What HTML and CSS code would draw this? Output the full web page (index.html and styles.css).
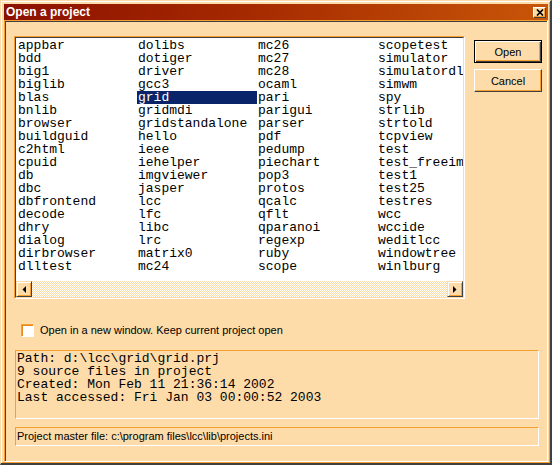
FILE: index.html
```html
<!DOCTYPE html>
<html>
<head>
<meta charset="utf-8">
<title>Open a project</title>
<link rel="stylesheet" href="styles.css">
</head>
<body>
<div class="window">
  <div class="titlebar">
    <span class="title">Open a project</span>
    <span class="close"><svg width="8" height="7" viewBox="0 0 8 7"><path d="M1 0.5L7 6.5M7 0.5L1 6.5" stroke="#000" stroke-width="1.7" fill="none"/></svg></span>
  </div>
  <div class="client">
    <div class="main">
      <div class="listbox">
        <div class="listbox-inner">
          <div class="items">
            <div class="item">appbar</div>
            <div class="item">bdd</div>
            <div class="item">big1</div>
            <div class="item">biglib</div>
            <div class="item">blas</div>
            <div class="item">bnlib</div>
            <div class="item">browser</div>
            <div class="item">buildguid</div>
            <div class="item">c2html</div>
            <div class="item">cpuid</div>
            <div class="item">db</div>
            <div class="item">dbc</div>
            <div class="item">dbfrontend</div>
            <div class="item">decode</div>
            <div class="item">dhry</div>
            <div class="item">dialog</div>
            <div class="item">dirbrowser</div>
            <div class="item">dlltest</div>
            <div class="item">dolibs</div>
            <div class="item">dotiger</div>
            <div class="item">driver</div>
            <div class="item">gcc3</div>
            <div class="item sel">grid</div>
            <div class="item">gridmdi</div>
            <div class="item">gridstandalone</div>
            <div class="item">hello</div>
            <div class="item">ieee</div>
            <div class="item">iehelper</div>
            <div class="item">imgviewer</div>
            <div class="item">jasper</div>
            <div class="item">lcc</div>
            <div class="item">lfc</div>
            <div class="item">libc</div>
            <div class="item">lrc</div>
            <div class="item">matrix0</div>
            <div class="item">mc24</div>
            <div class="item">mc26</div>
            <div class="item">mc27</div>
            <div class="item">mc28</div>
            <div class="item">ocaml</div>
            <div class="item">pari</div>
            <div class="item">parigui</div>
            <div class="item">parser</div>
            <div class="item">pdf</div>
            <div class="item">pedump</div>
            <div class="item">piechart</div>
            <div class="item">pop3</div>
            <div class="item">protos</div>
            <div class="item">qcalc</div>
            <div class="item">qflt</div>
            <div class="item">qparanoi</div>
            <div class="item">regexp</div>
            <div class="item">ruby</div>
            <div class="item">scope</div>
            <div class="item">scopetest</div>
            <div class="item">simulator</div>
            <div class="item">simulatordll</div>
            <div class="item">simwm</div>
            <div class="item">spy</div>
            <div class="item">strlib</div>
            <div class="item">strtold</div>
            <div class="item">tcpview</div>
            <div class="item">test</div>
            <div class="item">test_freeimage</div>
            <div class="item">test1</div>
            <div class="item">test25</div>
            <div class="item">testres</div>
            <div class="item">wcc</div>
            <div class="item">wccide</div>
            <div class="item">weditlcc</div>
            <div class="item">windowtree</div>
            <div class="item">winlburg</div>
          </div>
          <div class="hscroll">
            <div class="sbtn"><svg width="4" height="7" viewBox="0 0 4 7"><path d="M4 0V7L0.5 3.5Z" fill="#000"/></svg></div>
            <div class="track"></div>
            <div class="sbtn"><svg width="4" height="7" viewBox="0 0 4 7"><path d="M0 0V7L3.5 3.5Z" fill="#000"/></svg></div>
          </div>
        </div>
      </div>
      <div class="buttons">
        <div class="btn default">Open</div>
        <div class="btn">Cancel</div>
      </div>
    </div>
    <div class="check"><span class="box"></span><span class="label">Open in a new window. Keep current project open</span></div>
    <div class="info">Path: d:\lcc\grid\grid.prj<br>9 source files in project<br>Created: Mon Feb 11 21:36:14 2002<br>Last accessed: Fri Jan 03 00:00:52 2003</div>
    <div class="status">Project master file: c:\program files\lcc\lib\projects.ini</div>
  </div>
</div>
</body>
</html>
```
FILE: styles.css
```css
html, body {
  margin: 0;
  padding: 0;
  background: #fedcaa;
  font-family: "Liberation Sans", Arial, sans-serif;
  font-size: 11px;
  color: #000;
}
.window {
  width: 552px;
  height: 465px;
  box-sizing: border-box;
  border-style: solid;
  border-width: 1px 2px 2px 1px;
  border-color: #fedcaa #404040 #404040 #fedcaa;
  box-shadow: inset 1px 1px #fff, inset -1px -1px #f5a030;
  padding: 3px 2px 1px 3px;
  background: #fedcaa;
  display: flex;
  flex-direction: column;
}
.titlebar {
  height: 16px;
  flex: none;
  display: flex;
  align-items: center;
  justify-content: space-between;
  padding: 0 2px 0 2px;
  background: linear-gradient(to right, #8c1000 0%, #a52a00 45%, #c85608 100%);
}
.title {
  color: #fff;
  font-weight: bold;
  font-size: 12px;
  line-height: 16px;
}
.close {
  width: 13px;
  height: 11px;
  box-sizing: border-box;
  background: #fedcaa;
  border-style: solid;
  border-width: 1px;
  border-color: #fff #404040 #404040 #fff;
  box-shadow: inset -1px -1px #f5a030;
  display: flex;
  align-items: center;
  justify-content: center;
}
.close svg { display: block; }
.client {
  flex: 1;
  border-style: solid;
  border-width: 1px;
  border-color: #f5a030 #fff #fff #f5a030;
  box-shadow: inset 1px 1px #404040;
  padding: 1px 0 0 1px;
  display: flex;
  flex-direction: column;
}
.main {
  display: flex;
  margin: 14px 0 0 8px;
}
.listbox {
  width: 451px;
  height: 263px;
  box-sizing: border-box;
  border-style: solid;
  border-width: 1px;
  border-color: #f5a030 #fff #fff #f5a030;
}
.listbox-inner {
  height: 100%;
  box-sizing: border-box;
  border-style: solid;
  border-width: 1px;
  border-color: #404040 #fedcaa #fedcaa #404040;
  background: #fff;
  display: flex;
  flex-direction: column;
}
.items {
  flex: 1;
  overflow: hidden;
  padding: 1px 0 0 1px;
  display: grid;
  grid-auto-flow: column;
  grid-template-rows: repeat(18, 13px);
  grid-auto-columns: 120px;
  align-content: start;
  font-family: "Liberation Mono", "Courier New", monospace;
  font-size: 13px;
  line-height: 13px;
}
.item {
  padding-left: 1px;
  white-space: nowrap;
  overflow: hidden;
}
.item.sel {
  background: #0a246a;
  color: #fff;
}
.hscroll {
  height: 16px;
  flex: none;
  display: flex;
}
.sbtn {
  width: 16px;
  height: 16px;
  box-sizing: border-box;
  background: #fedcaa;
  border-style: solid;
  border-width: 1px;
  border-color: #fedcaa #404040 #404040 #fedcaa;
  box-shadow: inset 1px 1px #fff, inset -1px -1px #f5a030;
  display: flex;
  align-items: center;
  justify-content: center;
}
.sbtn svg { display: block; }
.track {
  flex: 1;
  background: repeating-conic-gradient(#fff 0 25%, #fedcaa 0 50%) 0 0 / 2px 2px;
}
.buttons {
  margin: 4px 0 0 9px;
  display: flex;
  flex-direction: column;
  gap: 6px;
}
.btn {
  width: 68px;
  height: 23px;
  box-sizing: border-box;
  border-style: solid;
  border-width: 1px;
  border-color: #fff #404040 #404040 #fff;
  box-shadow: inset -1px -1px #f5a030;
  background: #fedcaa;
  display: flex;
  align-items: center;
  justify-content: center;
  font-size: 11px;
}
.btn.default {
  border-color: #000;
  box-shadow: inset 1px 1px #fff, inset -1px -1px #404040, inset -2px -2px #f5a030;
}
.check {
  display: flex;
  align-items: center;
  margin: 25px 0 0 15px;
  height: 13px;
}
.box {
  width: 13px;
  height: 13px;
  box-sizing: border-box;
  border-style: solid;
  border-width: 1px;
  border-color: #f5a030 #fff #fff #f5a030;
  box-shadow: inset 1px 1px #e08a20;
  background: #fff;
}
.label {
  margin-left: 6px;
  line-height: 13px;
}
.info {
  margin: 13px 0 0 9px;
  width: 524px;
  height: 69px;
  box-sizing: border-box;
  border-style: solid;
  border-width: 1px;
  border-color: #f5a030 #fff #fff #f5a030;
  padding: 1px 0 0 1px;
  font-family: "Liberation Mono", "Courier New", monospace;
  font-size: 13px;
  line-height: 13px;
  white-space: nowrap;
}
.status {
  margin: 8px 0 0 9px;
  width: 524px;
  height: 19px;
  box-sizing: border-box;
  border-style: solid;
  border-width: 1px;
  border-color: #f5a030 #fff #fff #f5a030;
  padding: 2px 0 0 1px;
  line-height: 13px;
  white-space: nowrap;
}
```
